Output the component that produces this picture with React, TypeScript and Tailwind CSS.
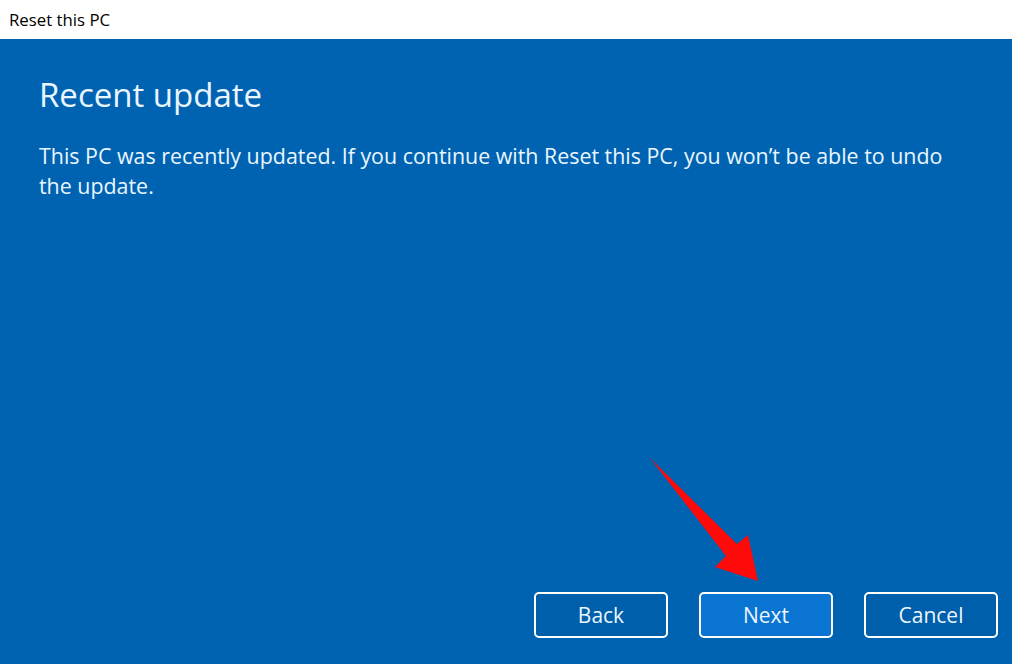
const buttons = ["Back", "Next", "Cancel"];

export default function App() {
  return (
    <div
      className="relative flex h-[664px] w-[1012px] flex-col overflow-hidden"
      style={{ fontFamily: '"Open Sans", "Noto Sans", sans-serif' }}
    >
      {/* title bar */}
      <div className="flex h-[39px] items-center bg-white pl-[9px] text-[16.8px] text-black">
        Reset this PC
      </div>

      <div className="flex flex-1 flex-col bg-[#0063b1] px-[39px] text-white">
        <h1 className="mt-[33px] text-[33px] leading-[46px] font-normal text-[#eaf6ff]">Recent update</h1>
        <p className="mt-[23px] text-[21.4px] leading-[30px] text-[#eaf6ff] whitespace-nowrap">
          This PC was recently updated. If you continue with Reset this PC, you won’t be able to undo
          <br />
          the update.
        </p>

        <div className="mt-auto mb-[26px] -mr-[25px] flex justify-end gap-[31px]">
          {buttons.map((b) => (
            <button
              key={b}
              className={`h-[46px] w-[134px] rounded-[5px] border-2 border-white pt-[2px] text-[21px] text-[#eaf6ff] ${
                b === "Next" ? "bg-[#0a74d2]" : "bg-[#005fab]"
              }`}
            >
              {b}
            </button>
          ))}
        </div>
      </div>

      {/* red annotation arrow */}
      <svg className="pointer-events-none absolute inset-0" width="1012" height="664">
        <polygon
          points="650,458 737,544 748,535 758,581 715,567 726,556"
          fill="#ff0a0a"
        />
      </svg>
    </div>
  );
}
